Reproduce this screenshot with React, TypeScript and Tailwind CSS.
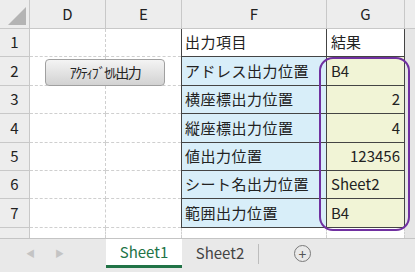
import React from 'react';

const rows = [
  { n: 1, f: '出力項目', g: '結果', head: true, right: false },
  { n: 2, f: 'アドレス出力位置', g: 'B4', head: false, right: false },
  { n: 3, f: '横座標出力位置', g: '2', head: false, right: true },
  { n: 4, f: '縦座標出力位置', g: '4', head: false, right: true },
  { n: 5, f: '値出力位置', g: '123456', head: false, right: true },
  { n: 6, f: 'シート名出力位置', g: 'Sheet2', head: false, right: false },
  { n: 7, f: '範囲出力位置', g: 'B4', head: false, right: false },
];

const heights = ['h-[28px]', 'h-[29px]', 'h-[28px]', 'h-[29px]', 'h-[28px]', 'h-[28px]', 'h-[29px]'];

const font = { fontFamily: '"Noto Sans CJK JP", "Liberation Sans", sans-serif' };

const App = (): JSX.Element => {
  return (
    <div className="relative w-[415px] h-[272px] overflow-hidden bg-white text-[#222]" style={font}>
      {/* column headers */}
      <div className="flex h-[29px] bg-[#ededed] border-b border-[#c8c8c8]">
        <div className="w-[30px] border-r border-[#c8c8c8] flex items-end justify-end p-[3px]">
          <div className="w-0 h-0 border-l-[18px] border-l-transparent border-b-[18px] border-b-[#b4b4b4]" />
        </div>
        <div className="w-[76px] border-r border-[#c8c8c8] flex items-center justify-center text-[15px]">D</div>
        <div className="w-[76px] border-r border-[#c8c8c8] flex items-center justify-center text-[15px]">E</div>
        <div className="w-[145px] border-r border-[#c8c8c8] flex items-center justify-center text-[15px]">F</div>
        <div className="w-[78px] border-r border-[#c8c8c8] flex items-center justify-center text-[15px]">G</div>
        <div className="flex-1" />
      </div>

      {/* rows */}
      {rows.map((r, i) => (
        <div key={r.n} className={`flex ${heights[i]}`}>
          <div className="w-[30px] bg-[#ededed] border-r border-b border-[#c8c8c8] flex items-center justify-center text-[15px]">
            {r.n}
          </div>
          <div className="w-[76px] border-r border-b border-dashed border-[#cfcfcf] relative">
            {r.n === 2 && (
              <div className="absolute left-[15px] top-[2px] w-[120px] h-[27px] rounded-[4px] border border-[#a0a0a0] bg-gradient-to-b from-[#f4f4f4] to-[#d2d2d2] flex items-center justify-center text-[14px] tracking-[-1.5px] z-10">
                ｱｸﾃｨﾌﾞｾﾙ出力
              </div>
            )}
          </div>
          <div className="w-[75px] border-b border-dashed border-[#cfcfcf]" />
          <div
            className={`w-[146px] border-l border-r border-b border-[#444] flex items-center pl-[3px] text-[15px] tracking-[0.5px] ${
              r.head ? 'bg-white' : 'bg-[#d8eef9]'
            }`}
          >
            {r.f}
          </div>
          <div
            className={`w-[78px] border-r border-b border-[#444] flex items-center px-[4px] text-[15px] ${
              r.head ? 'bg-white' : 'bg-[#f1f4d6]'
            } ${r.right ? 'justify-end' : 'justify-start'}`}
          >
            {r.g}
          </div>
          <div className="flex-1 bg-[#e6e6e6]" />
        </div>
      ))}

      {/* partial row 8 */}
      <div className="flex h-[10px]">
        <div className="w-[30px] bg-[#ededed] border-r border-[#c8c8c8]" />
        <div className="w-[76px] border-r border-dashed border-[#cfcfcf]" />
        <div className="w-[76px] border-r border-dashed border-[#cfcfcf]" />
        <div className="w-[145px] border-r border-dashed border-[#cfcfcf]" />
        <div className="w-[78px] border-r border-dashed border-[#cfcfcf]" />
        <div className="flex-1 bg-[#e6e6e6]" />
      </div>

      {/* sheet tabs */}
      <div className="flex h-[34px] bg-[#e9e9e9] border-t border-[#c4c4c4]">
        <div className="w-[106px] h-[29px] flex items-center pl-[26px] gap-[20px] text-[9px] text-[#c4c4c4]">
          <span>◀</span>
          <span>▶</span>
        </div>
        <div className="w-[76px] h-[29px] bg-white border-b-[3px] border-[#217346] flex items-center justify-center text-[15px] text-[#217346]">
          Sheet1
        </div>
        <div className="w-[76px] h-[29px] flex items-center justify-center text-[15px] text-[#444]">
          Sheet2
        </div>
        <div className="w-px h-[20px] mt-[5px] bg-[#bdbdbd]" />
        <div className="w-[52px] h-[29px] flex items-center justify-end">
          <div className="w-[17px] h-[17px] rounded-full border border-[#7a7a7a] flex items-center justify-center text-[14px] leading-none text-[#555]">
            +
          </div>
        </div>
      </div>

      {/* purple highlight */}
      <div className="absolute left-[319px] top-[57px] w-[91px] h-[174px] rounded-[14px] border-2 border-[#7030a0] pointer-events-none" />
    </div>
  );
};

export default App;
